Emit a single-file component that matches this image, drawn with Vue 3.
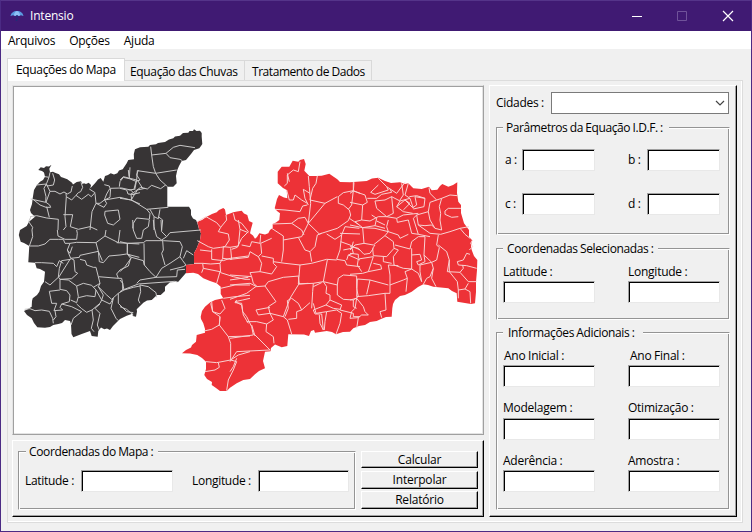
<script setup>
const tabs = ['Equações do Mapa', 'Equação das Chuvas', 'Tratamento de Dados']
const menus = ['Arquivos', 'Opções', 'Ajuda']
const params = ['a :', 'b :', 'c :', 'd :']
const selected = ['Latitude :', 'Longitude :']
const extras = ['Ano Inicial :', 'Ano Final :', 'Modelagem :', 'Otimização :', 'Aderência :', 'Amostra :']
const actions = ['Calcular', 'Interpolar', 'Relatório']
</script>

<template>
  <div class="window">
    <header class="titlebar">
      <svg class="logo" viewBox="0 0 14 12">
        <path d="M.5 6C1 3 3.500 1 7 1s6 2 6.500 5L11 5.200 9 6 7 5.200 5 6 3 5.200z" fill="#5b9ae0" />
        <path d="M4 5C4.300 3 5.500 1.500 7 1c1.500.5 2.700 2 3 4L9 6 7 5 5 6z" fill="#8fc0f5" />
        <path d="M7 5v5.500H5.800" fill="none" stroke="#1c2f78" />
      </svg>
      <span class="caption">Intensio</span>
      <svg class="controls" viewBox="0 0 104 12">
        <path d="M0 6.500h10" stroke="#fff" />
        <path d="M45.500 1.500h9v9h-9z" fill="none" stroke="#70539a" />
        <path d="M91 1l10 10M101 1L91 11" stroke="#fff" stroke-width="1.200" />
      </svg>
    </header>
    <nav class="menubar">
      <span v-for="m in menus" :key="m">{{ m }}</span>
    </nav>
    <main class="body">
      <div class="tabs">
        <div v-for="(t, i) in tabs" :key="t" class="tab" :class="['tab' + i, { active: i === 0 }]">{{ t }}</div>
      </div>
      <div class="pane">
        <div class="left">
          <div class="map">
            <svg viewBox="14 87 468 346" width="468" height="346">
              <path class="sertao" d="M38.300 170L40.700 167.300 44 168 46 166.300 49 166.500 51.500 164.800 49.300 168.700 50 172.300 53 171.800 55 172.700 59 174.300 61 177 63.300 177.700 67.300 179.300 70 181.300 72 182.700 73 184.500 76.700 182 81 181.300 82.500 184 84 183.300 86 184 88.700 182.700 91 185 90.300 188.300 95 183.300 98 179.500 100.700 178 103.300 181.700 105 176 108 175 110.700 173.300 114 174.500 117.300 173.300 119 170.500 122.700 169.300 126.700 163.300 128.300 160 134 159.300 133.800 154 135 149.300 140 147.300 148.300 146.700 150 145 156 144.300 158 143 165 142 169 139.500 173.300 138.300 175 136.500 180 135.700 183 133 188.300 132.700 189.500 131 193 131 194 129.300 196.500 131 200 130.700 201.700 133 201.700 136.700 202.300 144 201 146 199.300 148.300 194 150 191 154 188.300 157.300 186 160 181.700 161 179 166 177.300 170 176 176 176.700 183.300 173.300 186.700 167.300 186.700 167.300 206.700 189 206.700 191 210 191 215 193 218.500 196 220 197.300 223 199 229 201 233.300 200 240 196.700 248.300 194 253.300 194 264 186 265 188 270 185.700 273.300 178.300 281.700 170 282.300 165 286.700 165 291 160.700 295 157 295 151.700 300 147 300.500 143.300 302.700 139 307 136.700 309.300 137 311.500 136 316.700 132.700 316 133 313.500 126.700 315.700 120 319 116 323 113 326 110 330 107 328.500 104.300 329.300 101 327.500 98.300 331 97.700 336.700 91.700 336 90 331 81.700 334 73.300 337.300 71.500 334 71 324.300 70 321 65 320 62 323 58.300 324 53.300 325 50 327 45 327.700 37.300 327.300 34 323 31.700 318.300 27 315 24 311 28 309 31.700 306.700 32 301 32.700 298.300 37 295 39.300 291.700 41 286 44 281.700 45 271.700 40 269 36.700 268.300 35 262.700 28.300 262.300 29.300 246 24 243 20.700 241.700 18.800 235 20 230 26.700 226 29 221.700 35 216.700 31 213 30 210 32 204 32.700 198.300 34 190 37 185 40 181.700 43 180 45 176.700 44 172.500 42 171z" />
              <path class="leste" d="M197.300 221.700L202 220 206.700 216.700 212 214 216.700 212.300 219 210 223.300 208 225 209.500 226 215 230 213.500 233.300 212.300 237 211.500 241.700 210.700 244 213.500 247.300 215 249 221 252.700 222.700 251 229 250 233.300 253 235.500 255 238.700 257 237 259.300 233.300 265 234.500 268.300 233.300 270 230 272.700 228 272.700 224 276 222.500 279.300 220 280 213.300 277 211 274.700 208.300 276 203 277 199 279 195 284 197.500 287.300 198.300 286.700 190 283 188 277.700 183.300 277.700 171.700 281.700 166.700 289.300 166.700 292.700 160.700 298.300 161.700 300 160 304 159 305.700 164 304.300 170.700 309.300 176 316 176 321.700 175.700 329.300 173.700 334 177 337.300 179.300 340 182 350 182.300 366.700 181 372 178.500 378.300 177.700 385 181 391 183 400 182.300 405 184 408.300 183.300 413.300 188.300 421.700 189 429 186.700 431.700 190.300 437.300 189.700 440 186 442.300 184 448.300 186.700 453 185 457.300 182.300 457 193 458.300 201.700 461 205 461 213 464 223.300 469 230 469 237 472 240 471 246 471.700 250 474 256 477.300 260 477 270 476 281.700 476 292 475 303.300 471 304 457.300 301.700 456.700 293.300 452 291 448.300 288.300 433.300 286.700 428 285 423.300 284.300 418 287 411.700 291.700 405 295 400 296 395 300 393 304 392.300 308.300 391.700 316.700 386 317 381 319 376.700 321 370 322 365 325 359 326 353.300 328.300 350 331.700 343 332 336 334.300 332 332 326.700 331 315 332.700 314 330 311 331 309 336 304 334.500 288.300 334.300 287.300 346 281.700 347.300 275 344.500 271 348 270.500 351.300 265 351.700 263 361 265 368.300 259 371 255 374.300 250 379 243.300 380 236.700 383.300 230 387.700 226.700 391 220 391 216 388 211.700 385 212 382 207 379 204.300 375 206 369 206 361.700 202 358 197.300 355 190 353.500 182 353.300 186 350 191 347.500 192 345 196 341.700 196.700 335 205 332.700 205 329 203.300 323.300 201 319 200.700 316.700 202 311 205 306.700 210 302.500 215 300 223.300 298.300 220.700 294 220.700 286.700 216.700 283.300 210 281 203.300 278.300 198 274 193.300 272.700 186 273.300 186 265 194 264 194 253.300 196.700 248.300 200 240 201 233.300 199 229z" />

              <g class="dark-lines">
                <g transform="translate(10 120) scale(.3333)">
                  <path d="M105 170L117 172 120 157M128 160L134 180 130 195 112 198 109 192 80 195M117 172L110 190 102 205 108 230 107 247 62 237M109 192L120 214 135 214 150 222 162 216 172 222 183 216 187 198M120 214L108 247 119 255 122 262 108 262 90 255 68 237M60 290L80 287 110 294 145 298 144 330M110 260L118 292M168 220L169 230 165 290 168 320 160 330M169 230L185 240 198 226 215 238 235 223 244 230 255 218 238 207M213 187L218 202 212 215 205 218 198 226M255 220L258 250 270 250 283 240 290 222 300 205 298 198 283 194M258 250L246 275 240 330M258 250L282 262 290 250 284 240 330 232 362 240 390 252M285 274L325 270 330 298 310 315 293 310 284 285zM284 240L300 232 302 205 335 204 362 210 374 222 365 238M328 200L330 185 340 172 358 176 360 142M358 176L378 184 372 208 356 210M378 184L390 180M385 150L380 165 390 180M160 284L188 284 181 320 205 328 240 320 262 330M63 290L56 305 68 322 66 330M374 222L390 218" />
                </g>
                <g transform="translate(120 120) scale(.3333)">
                  <path d="M92 80L95 105 138 100 160 82 180 76 225 83M138 100L150 113 180 118 187 122M95 105L100 140 107 160 170 150M107 160L52 152 50 180 44 210M107 160L120 180 137 195 122 206 95 196 82 207 62 202 40 218 33 222 35 240 0 235M50 180L10 170 0 180M25 150L27 170M35 240L80 268 145 262M80 268L90 280 88 298 50 294 40 310 38 325M90 268L102 290 102 330M102 290L115 296 120 268M115 290L128 300 125 330M0 205L20 210 24 222 44 224 52 210 75 205M52 180L68 205M137 195L142 200" />
                </g>
                <g transform="translate(10 230) scale(.3333)">
                  <path d="M66 0L68 20 58 48 85 48 105 42 120 28 145 28 160 28 165 40 180 40 200 37 258 38 285 18 288 0M142 0L144 18 165 28 200 28 202 10 200 0M180 40L172 60 182 85 208 82 210 76 265 64 268 95 280 98 297 78 330 75 350 72 388 82M172 60L180 70 187 50M258 38L265 64 277 92M285 18L325 38 330 0M320 38L388 42M352 42L352 72 362 85 355 108 330 120 320 132 325 145 265 140 258 112 250 112 230 105 226 92 210 88M182 85L192 90 195 125 203 130 185 146 150 148 146 142 160 120 180 88M160 100L148 92 140 110 130 100 95 98 75 98M182 88L155 92 148 115 145 142 120 165 105 155M150 148L150 178 170 182 180 195 178 215 155 222 150 232 158 240 132 242 140 220 125 220 118 184 150 180M150 148L175 150 200 168 205 200 200 218 182 210M200 168L220 160 245 166 258 180 255 200 230 197 205 203M200 222L215 236 230 247 246 240 270 220 275 210 258 180M155 222L185 230 215 245 190 265 183 285M246 240L250 270 244 295 252 305M270 222L255 235 270 250 262 285 268 300M265 140L270 160 250 172M270 160L265 170 280 195 275 210 300 222 310 205 303 235 318 265 325 272M265 170L290 195 305 208 325 190 342 180 335 145 325 145M342 180L370 172 390 168M325 190L325 220 350 245 370 248M44 238L60 236 75 242 95 240 118 244 128 265 130 280M135 242L138 260 130 270" />
                </g>
                <g transform="translate(120 220) scale(.3333)">
                  <path d="M38 0L40 30 50 55 65 55 70 30 85 20 88 0M100 0L102 20 110 50 125 60 140 50 125 35 123 0M0 65L22 70 70 68 78 62 130 62 180 65 187 80 180 110 150 130 125 145 108 172M22 70L22 100 35 112 70 122 73 135 72 70M73 135L90 155 108 172 60 180 50 190M128 62L130 90 125 100 135 135M35 112L15 140 0 155M0 180L8 190 8 210 0 215M140 50L150 38 243 30M190 115L200 92 220 105M150 150L190 140 198 135M108 172L170 170 172 150 195 148M55 192L165 184 172 186M60 195L85 200 108 218 110 232M60 195L62 215 55 240 60 250M55 192L8 210M0 260L20 268 40 285M180 110L188 122 198 135" />
                </g>
              </g>

              <g class="light-lines">
                <g transform="translate(120 220) scale(.3333)">
                  <path d="M232 5L258 -10 290 8 302 22 295 35 325 42 328 60 315 80 302 82 280 85 265 80 232 62M302 22L320 0 318 -15M355 0L360 28 385 38M360 28L355 78 330 82 310 80 308 115 300 130 272 132 248 130 222 130M275 88L275 118 310 122 330 115 385 108M240 90L275 94M308 115L335 118 332 85M248 130L250 145 300 155 290 190M250 145L245 158M300 130L302 158 340 170 375 178 390 178M302 205L345 195 390 195M310 235L345 230 390 226M345 245L368 240 390 235M272 250L278 275 300 282 315 265 305 240M275 245L278 275M278 275L300 290 298 315 275 328 252 333M300 290L298 315 325 350 390 348M325 350L332 370 332 420 355 405 390 395M258 425L290 428 332 420 350 425 340 450 325 480 320 512M295 428L298 442 285 450 255 455M345 245L365 255 370 285 385 310" />
                </g>
                <g transform="translate(230 150) scale(.3333)">
                  <path d="M10 190L15 210 35 220 55 245 35 265 22 292 5 298M35 285L60 290 65 275 90 280 92 255M0 328L55 322 60 305 85 320 95 310 92 280 125 265M95 318L130 325 130 340 140 350 125 372 90 365 60 368 65 380 0 375M55 382L0 390M85 320L95 340 90 365M130 335L165 340 210 345 245 340 290 328 320 330M0 405L60 400 80 410 105 408 115 395 160 382 208 378M65 380L70 400 80 408M105 408L138 455 115 470 120 490 160 500 180 445 208 400M0 448L50 430 80 408M15 458L35 460 38 485 50 500 65 530 70 555 35 560 0 565M20 450L15 458M50 515L80 515 110 522 130 510 120 490 85 495 78 480 120 472M110 522L108 545 130 560 132 580M70 550L120 600 20 605 0 635M65 525L75 558M20 625L10 650 0 665M160 500L172 510 185 552M165 500L175 475 172 452 185 445 205 460 215 480 240 458M200 505L175 508M215 480L200 485 200 505M163 108L172 100 172 75 190 60 205 65 210 35M178 95L172 70M135 178L165 180 210 185 218 168 232 165M170 120L178 150 190 150 195 135 215 150 232 160M235 78L238 110 242 160 235 220 215 260 205 262 160 270M220 118L240 130M220 118L225 145 235 165M262 78L258 100 248 115 240 150 285 160 235 220 268 252 322 235 355 212 362 195 358 180 340 165 325 160 325 140 340 128 370 122 390 130M322 140L285 160M370 96L370 122 365 165 355 178M358 205L388 225M128 222L185 220 205 205 225 202 235 220M185 220L215 240 222 255M125 235L160 258 160 300 155 335M205 262L225 300 240 305 245 335M240 305L255 290 262 255 275 250M290 252L315 268 335 255 345 230 388 235M335 255L330 300 320 328M330 250L390 252M332 275L360 285 390 300M340 300L365 295 370 275M365 290L370 310 355 315 350 330M355 315L390 330M320 328L345 332 350 345 390 350M210 345L205 402 250 400 280 395 322 405M205 380L208 402 235 400M292 330L280 395 290 410 288 430 300 435 300 450 288 465 250 480 255 492 275 492 280 540 270 520 268 495M250 400L248 425 245 475M275 398L250 410M322 405L325 385 340 375 380 378 380 415 385 440 370 450 340 448 322 435zM250 460L258 490M258 490L290 485 320 480 335 490 330 520 318 553M290 485L285 515 283 540M300 450L335 465 330 480 370 490 370 500 390 500M370 450L370 470 380 475M288 465L310 475 330 478" />
                </g>
                <g transform="translate(350 165) scale(.3333)">
                  <path d="M12 52L10 78 45 90 52 112 38 120 0 112M10 78L0 85M85 40L110 65 115 75 75 88 62 82 85 60M52 100L80 100 95 88 125 82 120 72M110 65L140 85 165 52M155 55L160 90 150 105M175 55L165 90 180 100 190 130M38 120L35 165 15 170 38 188 75 182 80 160 65 150M75 108L80 130 110 155 130 145 125 95 105 105 75 108M35 165L60 168 85 155 110 155 140 160 160 150 205 145M125 95L150 108 140 125 160 140 188 145M140 125L165 105 180 115 160 135M150 108L180 100M165 105L188 128 200 120 195 95 225 100 222 125 190 132M178 95L200 92 225 100M237 68L240 85 260 105 240 112 235 140 200 150 205 180 240 205 272 208M260 105L275 100 300 90 322 92M275 100L268 125 272 145 270 165 275 195 255 190 245 180 225 182 205 180M285 138L295 130 333 130M285 138L285 148 305 157 325 155M235 140L240 165 255 190M272 208L300 200 330 190 357 185M330 190L345 208 360 220M200 150L190 160 205 208 240 215M140 160L142 172 175 165 185 205 205 208M115 165L110 185 115 200 145 210 150 220 175 208M0 180L38 188 42 235 15 240 0 255M38 188L75 190 115 200 105 212 70 240 42 235M105 212L130 230 132 250 110 275 70 272 68 250 75 240M135 240L180 252 185 230 205 215 225 215 222 270 245 292 260 285 268 248 260 240 265 210M132 250L145 255 130 275 132 300 160 310 185 312 185 250M185 270L210 268 215 285 200 290 205 300 225 290 222 270M265 240L290 260 298 285 292 320 330 322 355 350 380 350M298 285L298 320 322 350 325 375 345 372 360 380 362 415M245 292L250 310 240 335 230 340 220 358M245 292L210 300 210 320 215 350M250 310L245 340 258 365M185 312L205 325 215 350M145 302L115 300 120 330 120 360 160 345 172 340 165 320 185 312M172 340L168 380M120 360L120 385 105 385 55 392 20 395 22 342 60 345 115 360M60 345L50 388M0 328L38 325 55 320 65 290 70 275 25 282 22 300 35 320M55 320L95 312 92 300 70 295M100 275L100 290 125 295M0 245L25 250 42 268 60 265 70 250M0 265L25 268 25 280M0 405L20 400 40 425 45 440 55 450 35 450 25 458 20 490M20 400L15 430 5 440 0 460 25 458M105 385L108 435 90 440 95 458M345 372L355 355M325 300L350 302 380 310M330 322L340 310 338 300M325 300L322 290 340 285 350 265 360 268M368 225L362 235 368 245 358 255M75 182L105 190M80 168L105 180M325 375L325 400" />
                </g>
              </g>
            </svg>
          </div>
          <div class="raised bottom">
            <section class="group coords">
              <h2>Coordenadas do Mapa :</h2>
              <label>Latitude :</label><input class="w92" />
              <label class="lon">Longitude :</label><input class="w91" />
            </section>
            <div class="actions">
              <button v-for="a in actions" :key="a">{{ a }}</button>
            </div>
          </div>
        </div>
        <div class="raised right">
          <div class="city">
            <label>Cidades :</label>
            <div class="combo">
              <svg viewBox="0 0 10 6" width="10" height="6"><path d="M1 1l4 4 4-4" fill="none" stroke="#444" stroke-width="1.200" /></svg>
            </div>
          </div>
          <section class="group params">
            <h2>Parâmetros da Equação I.D.F. :</h2>
            <div v-for="p in params" :key="p" class="param"><label>{{ p }}</label><input class="w73" /></div>
          </section>
          <section class="group selected">
            <h2>Coordenadas Selecionadas :</h2>
            <div v-for="s in selected" :key="s" class="field"><label>{{ s }}</label><input class="w92" /></div>
          </section>
          <section class="group extras">
            <h2>Informações Adicionais :</h2>
            <div v-for="(e, i) in extras" :key="e" class="field" :class="'extra' + i"><label>{{ e }}</label><input class="w92" /></div>
          </section>
        </div>
      </div>
    </main>
  </div>
</template>

<style>
body { margin: 0; overflow: hidden; }
</style>

<style scoped>
* { box-sizing: border-box; }
.window {
  width: 752px; height: 532px; display: flex; flex-direction: column;
  background: #f0f0f0; border: 1px solid #4b2a84; border-top-color: #55348a;
  font: 12px/16px "Open Sans", "Noto Sans", sans-serif; letter-spacing: -0.3px; word-spacing: -0.2px; color: #000;
  white-space: nowrap;
}
.titlebar { height: 30px; flex: none; background: #401a73; color: #fff; display: flex; align-items: center; padding-left: 9px; }
.logo { width: 14px; height: 12px; }
.caption { margin-left: 6px; letter-spacing: -0.2px; }
.controls { width: 104px; height: 12px; margin-left: auto; margin-right: 15px; }
.menubar { height: 18px; flex: none; background: #fff; display: flex; gap: 14px; padding: 2px 0 0 7px; letter-spacing: -0.25px; }
.body { flex: 1; padding: 9px 8px 8px 6px; display: flex; flex-direction: column; }
.tabs { height: 22px; display: flex; align-items: flex-end; }
.tab { height: 20px; border: 1px solid #d9d9d9; border-bottom: 0; border-left: 0; padding: 3px 0 0 5px; letter-spacing: -0.35px; }
.tab.active { height: 23px; border-left: 1px solid #d9d9d9; background: #fff; margin-bottom: -1px; padding: 3px 0 0 8px; z-index: 1; }
.tab0 { width: 118px; }
.tab1 { width: 120px; }
.tab2 { width: 127px; padding-left: 7px; letter-spacing: -0.45px; }
.pane { height: 443px; width: 736px; border: 1px solid #dcdcdc; padding: 4px; display: flex; gap: 5px; box-shadow: inset -1px -1px #fff; }
.left { width: 472px; display: flex; flex-direction: column; gap: 5px; }
.map {
  height: 350px; background: #fff; border: 1px solid; border-color: #e3e3e3 #a0a0a0 #a0a0a0 #e3e3e3;
  box-shadow: inset 1px 1px #a0a0a0, inset -1px -1px #e3e3e3; padding: 1px;
}
.map svg { display: block; }
.sertao { fill: #373435; }
.leste { fill: #ed3237; }
.dark-lines, .light-lines { fill: none; stroke-width: 3; stroke-linejoin: round; }
.dark-lines { stroke: #c9c8c8; }
.light-lines { stroke: #f9d2d2; }
.raised { border: 1px solid; border-color: #fff #000 #000 #fff; box-shadow: inset -1px -1px #a0a0a0; }
.bottom { height: 77px; display: flex; padding: 10px 5px 0 5px; }
.group { position: relative; border: 1px solid; border-color: #949494 #fff #fff #949494; box-shadow: inset 1px 1px #fff, inset -1px -1px #949494; }
h2 { position: absolute; top: -9px; left: 6px; margin: 0; padding: 0 3px 0 4px; background: #f0f0f0; font: inherit; line-height: 17px; letter-spacing: -0.37px; word-spacing: -0.4px; }
input { height: 22px; margin: 0; padding: 0 2px; border: 1px solid; border-color: #a0a0a0 #e8e8e8 #e8e8e8 #a0a0a0; box-shadow: inset 1px 1px #000; background: #fff; outline: 0; }
.w73 { width: 73px; }
.w91 { width: 91px; }
.w92 { width: 92px; }
.coords { width: 338px; flex: none; height: 59px; display: flex; align-items: flex-start; padding: 18px 0 0 6px; }
.coords h2 { left: 7px; width: 132px; padding-left: 3px; }
.coords label { width: 56px; padding-top: 3px; }
.coords .lon { width: 66px; margin-left: 19px; }
.actions { width: 117px; flex: none; margin-left: 5px; display: flex; flex-direction: column; gap: 2px; }
button { height: 18px; padding: 0; border: 1px solid; border-color: #fff #000 #000 #fff; box-shadow: inset -1px -1px #a0a0a0; background: #f0f0f0; color: #000; font: inherit; line-height: 16px; letter-spacing: -0.2px; }
button:first-child { height: 17px; line-height: 15px; margin-bottom: 1px; }
.right { width: 248px; height: 432px; padding: 6px 6px 0; }
.city { display: flex; align-items: center; height: 22px; }
.city label { width: 55px; }
.combo { width: 178px; height: 22px; border: 1px solid #7a7a7a; background: #fff; display: flex; align-items: center; justify-content: flex-end; padding-right: 3px; }
.group.params, .group.selected, .group.extras { width: 234px; display: grid; grid-template-columns: 125px 92px; align-content: start; }
.params { height: 108px; margin-top: 13px; padding: 21px 0 0 6px; row-gap: 22px; }
.params h2 { width: 166px; padding-left: 3px; letter-spacing: -0.4px; }
.param { display: flex; justify-content: space-between; width: 92px; align-items: center; }
.param label { padding-left: 2px; }
.param:nth-child(odd) label { padding-left: 0; }
.selected { height: 72px; margin-top: 13px; padding: 15px 0 0 6px; }
.selected h2 { width: 155px; }
.field { display: flex; flex-direction: column; }
.field label { height: 17px; letter-spacing: -0.25px; }
.extras { height: 178px; margin-top: 12px; padding: 15px 0 0 6px; row-gap: 13px; }
.extras h2 { width: 140px; padding-left: 5px; }
.extra0 label { padding-left: 1px; }
.extra1 label { padding-left: 2px; }
.extra2 label, .extra3 label { height: 18px; }
</style>
